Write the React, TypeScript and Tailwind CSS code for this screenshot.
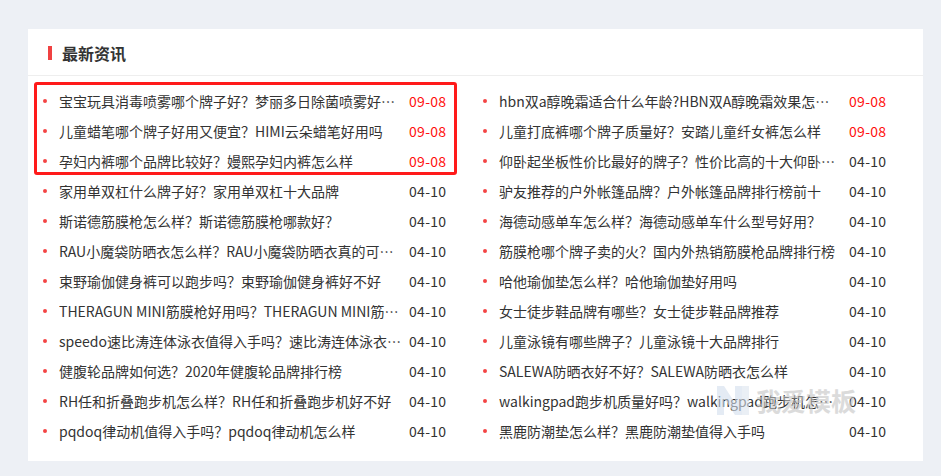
const left: [string, string, boolean][] = [
  ["宝宝玩具消毒喷雾哪个牌子好？梦丽多日除菌喷雾好不好用", "09-08", true],
  ["儿童蜡笔哪个牌子好用又便宜？HIMI云朵蜡笔好用吗", "09-08", true],
  ["孕妇内裤哪个品牌比较好？嫚熙孕妇内裤怎么样", "09-08", true],
  ["家用单双杠什么牌子好？家用单双杠十大品牌", "04-10", false],
  ["斯诺德筋膜枪怎么样？斯诺德筋膜枪哪款好？", "04-10", false],
  ["RAU小魔袋防晒衣怎么样？RAU小魔袋防晒衣真的可以防晒吗", "04-10", false],
  ["束野瑜伽健身裤可以跑步吗？束野瑜伽健身裤好不好", "04-10", false],
  ["THERAGUN MINI筋膜枪好用吗？THERAGUN MINI筋膜枪怎么样", "04-10", false],
  ["speedo速比涛连体泳衣值得入手吗？速比涛连体泳衣怎么样", "04-10", false],
  ["健腹轮品牌如何选？2020年健腹轮品牌排行榜", "04-10", false],
  ["RH任和折叠跑步机怎么样？RH任和折叠跑步机好不好", "04-10", false],
  ["pqdoq律动机值得入手吗？pqdoq律动机怎么样", "04-10", false],
];

const right: [string, string, boolean][] = [
  ["hbn双a醇晚霜适合什么年龄?HBN双A醇晚霜效果怎么样", "09-08", true],
  ["儿童打底裤哪个牌子质量好？安踏儿童纤女裤怎么样", "09-08", true],
  ["仰卧起坐板性价比最好的牌子？性价比高的十大仰卧起坐板", "04-10", false],
  ["驴友推荐的户外帐篷品牌？户外帐篷品牌排行榜前十", "04-10", false],
  ["海德动感单车怎么样？海德动感单车什么型号好用？", "04-10", false],
  ["筋膜枪哪个牌子卖的火？国内外热销筋膜枪品牌排行榜", "04-10", false],
  ["哈他瑜伽垫怎么样？哈他瑜伽垫好用吗", "04-10", false],
  ["女士徒步鞋品牌有哪些？女士徒步鞋品牌推荐", "04-10", false],
  ["儿童泳镜有哪些牌子？儿童泳镜十大品牌排行", "04-10", false],
  ["SALEWA防晒衣好不好？SALEWA防晒衣怎么样", "04-10", false],
  ["walkingpad跑步机质量好吗？walkingpad跑步机怎么样", "04-10", false],
  ["黑鹿防潮垫怎么样？黑鹿防潮垫值得入手吗", "04-10", false],
];

function Row({ title, date, hot }: { title: string; date: string; hot: boolean }) {
  return (
    <li className="flex h-[30px] items-center pr-[34px]">
      <span className="ml-[2px] mr-[12px] h-[4px] w-[4px] shrink-0 rounded-full bg-[#f44444]" />
      <span className="w-[344px] truncate text-[#333]">{title}</span>
      <span className={"ml-[6px] shrink-0 tracking-[0.3px] " + (hot ? "text-[#ff1010]" : "text-[#333]")}>
        {date}
      </span>
    </li>
  );
}

export default function App() {
  return (
    <div
      className="min-h-[476px] w-full bg-[#edf0f5] px-[28px] pt-[29px] text-[14px]"
      style={{ fontFamily: '"Noto Sans CJK SC", "Noto Sans", sans-serif' }}
    >
      <div className="relative w-[895px] bg-white pb-[15px]">
        <div className="flex h-[47px] items-center border-b border-[#eeeeee] pl-[20px] pt-[2px]">
          <span className="mr-[10px] h-[14px] w-[4px] bg-[#f04141]" />
          <span className="text-[16px] font-bold text-[#333]">最新资讯</span>
        </div>

        <div className="grid grid-cols-[440px_440px] pl-[13px] pt-[10px]">
          <ul>
            {left.map(([t, d, h]) => (
              <Row key={t} title={t} date={d} hot={h} />
            ))}
          </ul>
          <ul>
            {right.map(([t, d, h]) => (
              <Row key={t} title={t} date={d} hot={h} />
            ))}
          </ul>
        </div>

        {/* highlight annotation */}
        <div className="pointer-events-none absolute left-[6px] top-[53px] h-[93px] w-[423px] rounded-[3px] border-[3px] border-[#ff1a1a]" />

        {/* watermark */}
        <div className="pointer-events-none absolute left-[689px] top-[357px] flex items-center gap-[7px] opacity-60">
          <svg width="32" height="29" viewBox="0 0 32 29">
            <path d="M0 0h7l11 17V0h7v29h-7L7 12v17H0z" fill="#d3deed" />
            <path d="M25 0h7v29h-7z" fill="#dde5f0" />
          </svg>
          <span className="text-[25px] font-bold leading-none text-[#c4c4c4]">我爱模板</span>
        </div>
      </div>
    </div>
  );
}
